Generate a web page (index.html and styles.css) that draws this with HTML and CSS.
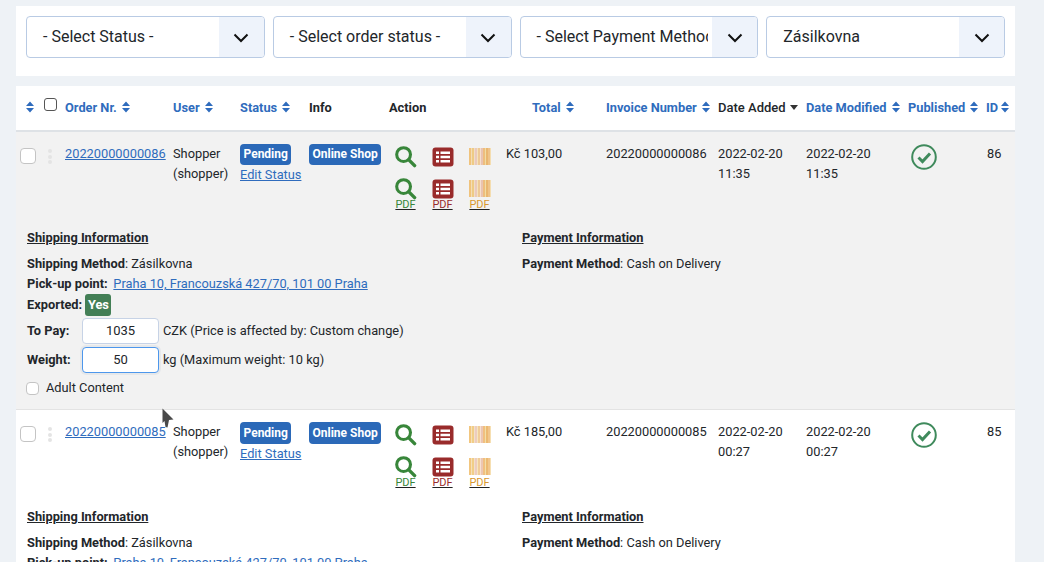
FILE: index.html
```html
<!DOCTYPE html>
<html lang="en">
<head>
<meta charset="utf-8">
<title>Orders</title>
<link rel="stylesheet" href="styles.css">
</head>
<body>
<svg class="defs" width="0" height="0">
  <symbol id="sort" viewBox="0 0 8 12"><path d="M4 .5 8 5H0zM4 11.5 0 7h8z"/></symbol>
  <symbol id="chev" viewBox="0 0 16 10"><path d="M1.5 1.5 8 8l6.5-6.5" fill="none" stroke="currentColor" stroke-width="2"/></symbol>
  <symbol id="mag" viewBox="0 0 24 24"><circle cx="10" cy="10" r="7.2" fill="none" stroke="#38863a" stroke-width="3.2"/><path d="m15.5 15.5 6 6" stroke="#38863a" stroke-width="3.6" stroke-linecap="round"/></symbol>
  <symbol id="list" viewBox="0 0 22 20"><rect x=".5" y=".5" width="21" height="19" rx="3" fill="#992b2b"/><path d="M4 4.500h3v2.400H4zM8.500 4.500H18v2.400H8.500zM4 8.800h3v2.400H4zM8.500 8.800H18v2.400H8.500zM4 13.100h3v2.400H4zM8.500 13.100H18v2.400H8.500z" fill="#fff"/></symbol>
  <symbol id="bar" viewBox="0 0 22 17"><path d="M0 0h2v17H0z" fill="#f0b860"/><path d="M2 0h1v17H2z" fill="#f5d9a8"/><path d="M3 0h2v17H3z" fill="#eec26a"/><path d="M5 0h1v17H5z" fill="#f0d8c0"/><path d="M6 0h2v17H6z" fill="#e8c0b0"/><path d="M8 0h1v17H8z" fill="#f5e0b0"/><path d="M9 0h2v17H9z" fill="#eec080"/><path d="M11 0h1v17h-1z" fill="#f5d8c8"/><path d="M12 0h2v17h-2z" fill="#e8b8a0"/><path d="M14 0h2v17h-2z" fill="#eeb060"/><path d="M16 0h1v17h-1z" fill="#f0d890"/><path d="M17 0h2v17h-2z" fill="#e8a850"/><path d="M19 0h2v17h-2z" fill="#eeb870"/><path d="M21 0h1v17h-1z" fill="#f5d8a0"/></symbol>
  <symbol id="ok" viewBox="0 0 26 26"><circle cx="13" cy="13" r="11.800" fill="none" stroke="#3f8a5c" stroke-width="2"/><path d="m7.500 13.500 4 4 7.500-8" fill="none" stroke="#3f8a5c" stroke-width="3"/></symbol>
</svg>

<main class="page">
  <section class="filters">
    <div class="pick"><span class="pick-text">- Select Status -</span><span class="pick-arrow"><svg class="chev"><use href="#chev"/></svg></span></div>
    <div class="pick"><span class="pick-text">- Select order status -</span><span class="pick-arrow"><svg class="chev"><use href="#chev"/></svg></span></div>
    <div class="pick"><span class="pick-text">- Select Payment Method -</span><span class="pick-arrow"><svg class="chev"><use href="#chev"/></svg></span></div>
    <div class="pick"><span class="pick-text">Zásilkovna</span><span class="pick-arrow"><svg class="chev"><use href="#chev"/></svg></span></div>
  </section>

  <section class="orders">
    <table class="grid">
      <colgroup>
        <col class="c-a"><col class="c-b"><col class="c-c"><col class="c-d"><col class="c-e"><col class="c-f"><col class="c-g"><col class="c-h"><col class="c-i"><col class="c-j"><col class="c-k"><col class="c-l">
      </colgroup>
      <thead>
        <tr>
          <th class="th-first"><svg class="sort"><use href="#sort"/></svg><input class="tick tick-head" type="checkbox"></th>
          <th><a>Order Nr. <svg class="sort"><use href="#sort"/></svg></a></th>
          <th><a>User <svg class="sort"><use href="#sort"/></svg></a></th>
          <th><a>Status <svg class="sort"><use href="#sort"/></svg></a></th>
          <th>Info</th>
          <th class="th-action">Action</th>
          <th class="th-total"><a>Total <svg class="sort"><use href="#sort"/></svg></a></th>
          <th><a>Invoice Number <svg class="sort"><use href="#sort"/></svg></a></th>
          <th class="th-active">Date Added <span class="caret"></span></th>
          <th><a>Date Modified <svg class="sort"><use href="#sort"/></svg></a></th>
          <th><a>Published <svg class="sort"><use href="#sort"/></svg></a></th>
          <th><a class="th-id">ID <svg class="sort"><use href="#sort"/></svg></a></th>
        </tr>
      </thead>
      <tbody class="odd">
        <tr class="main">
          <td class="grab"><input class="tick" type="checkbox"><span class="dots"><i></i><i></i><i></i></span></td>
          <td><a class="link" href="#">20220000000086</a></td>
          <td>Shopper (shopper)</td>
          <td><span class="tag">Pending</span><a class="link edit" href="#">Edit Status</a></td>
          <td><span class="tag">Online Shop</span></td>
          <td>
            <div class="acts">
              <svg class="i-mag"><use href="#mag"/></svg><svg class="i-list"><use href="#list"/></svg><svg class="i-bar"><use href="#bar"/></svg>
              <span class="pdf pdf-g"><svg class="i-mag"><use href="#mag"/></svg><u>PDF</u></span>
              <span class="pdf pdf-r"><svg class="i-list"><use href="#list"/></svg><u>PDF</u></span>
              <span class="pdf pdf-o"><svg class="i-bar"><use href="#bar"/></svg><u>PDF</u></span>
            </div>
          </td>
          <td>Kč 103,00</td>
          <td>20220000000086</td>
          <td class="date">2022-02-20 11:35</td>
          <td class="date">2022-02-20 11:35</td>
          <td class="td-pub"><svg class="i-ok"><use href="#ok"/></svg></td>
          <td>86</td>
        </tr>
        <tr class="detail">
          <td colspan="12">
            <div class="info">
              <div class="info-col">
                <h4>Shipping Information</h4>
                <p><b>Shipping Method</b>: Zásilkovna</p>
                <p><b>Pick-up point:</b> <a class="link near" href="#">Praha 10, Francouzská 427/70, 101 00 Praha</a></p>
                <p class="exported"><b>Exported:</b> <span class="yes">Yes</span></p>
                <div class="field"><b>To Pay:</b><input class="num" value="1035"><span>CZK (Price is affected by: Custom change)</span></div>
                <div class="field"><b>Weight:</b><input class="num num-focus" value="50"><span>kg (Maximum weight: 10 kg)</span></div>
                <label class="adult"><input class="tick tick-sm" type="checkbox">Adult Content</label>
              </div>
              <div class="info-col">
                <h4>Payment Information</h4>
                <p><b>Payment Method</b>: Cash on Delivery</p>
              </div>
            </div>
          </td>
        </tr>
      </tbody>
      <tbody>
        <tr class="main main-2">
          <td class="grab"><input class="tick" type="checkbox"><span class="dots"><i></i><i></i><i></i></span></td>
          <td><a class="link" href="#">20220000000085</a></td>
          <td>Shopper (shopper)</td>
          <td><span class="tag">Pending</span><a class="link edit" href="#">Edit Status</a></td>
          <td><span class="tag">Online Shop</span></td>
          <td>
            <div class="acts">
              <svg class="i-mag"><use href="#mag"/></svg><svg class="i-list"><use href="#list"/></svg><svg class="i-bar"><use href="#bar"/></svg>
              <span class="pdf pdf-g"><svg class="i-mag"><use href="#mag"/></svg><u>PDF</u></span>
              <span class="pdf pdf-r"><svg class="i-list"><use href="#list"/></svg><u>PDF</u></span>
              <span class="pdf pdf-o"><svg class="i-bar"><use href="#bar"/></svg><u>PDF</u></span>
            </div>
          </td>
          <td>Kč 185,00</td>
          <td>20220000000085</td>
          <td class="date">2022-02-20 00:27</td>
          <td class="date">2022-02-20 00:27</td>
          <td class="td-pub"><svg class="i-ok"><use href="#ok"/></svg></td>
          <td>85</td>
        </tr>
        <tr class="detail">
          <td colspan="12">
            <div class="info">
              <div class="info-col">
                <h4>Shipping Information</h4>
                <p><b>Shipping Method</b>: Zásilkovna</p>
                <p><b>Pick-up point:</b> <a class="link near" href="#">Praha 10, Francouzská 427/70, 101 00 Praha</a></p>
              </div>
              <div class="info-col">
                <h4>Payment Information</h4>
                <p><b>Payment Method</b>: Cash on Delivery</p>
              </div>
            </div>
          </td>
        </tr>
      </tbody>
    </table>
  </section>
</main>

<svg class="cursor" viewBox="0 0 12 20"><path d="M.5.500 11.500 11.500 7 12l-1.500 7.500-2-.5L2.500 13 .5 15z" fill="#4a4a4a"/></svg>
</body>
</html>
```

FILE: styles.css
```css
* { box-sizing: border-box; }
html, body { margin: 0; height: 562px; overflow: hidden; }
body { background: #eef2f6; font: 12.8px/19.5px Roboto, sans-serif; color: #22262a; }
.defs { position: absolute; }
.page { padding: 6px 29px 0 16px; }

.filters { background: #fff; height: 70px; padding: 10px 0 0 10px; display: grid; grid-template-columns: repeat(4, 238.75px); column-gap: 8px; align-items: start; margin-bottom: 10px; }
.pick { height: 42px; display: flex; border: 1px solid #b9cbe4; border-radius: 4px; overflow: hidden; background: #fff; }
.pick-text { flex: 1; min-width: 0; padding-left: 16px; font-size: 16px; line-height: 40px; white-space: nowrap; overflow: hidden; margin-right: 4px; }
.pick-arrow { flex: none; width: 45px; padding-top: 1px; background: #eef3fb; display: flex; align-items: center; justify-content: center; color: #111; }
.chev { width: 16px; height: 10px; }

.orders { background: #fff; height: 476px; overflow: hidden; }
.grid { width: 999px; table-layout: fixed; border-collapse: collapse; }
.c-a { width: 49px; } .c-b { width: 108px; } .c-c { width: 67px; } .c-d { width: 69px; }
.c-e { width: 78px; } .c-f { width: 119px; } .c-g { width: 100px; } .c-h { width: 112px; }
.c-i { width: 88px; } .c-j { width: 102px; } .c-k { width: 79px; } .c-l { width: 28px; }

th { height: 45px; padding: 0; text-align: left; font-weight: 700; font-size: 12.8px; white-space: nowrap; border-bottom: 2px solid #dee2e6; color: #22262a; }
th a { color: #2f6cbd; }
.sort { width: 8px; height: 12px; margin-left: 2px; fill: #2f6cbd; vertical-align: -1px; }
.th-first { padding-left: 10px; }
.th-first .sort { margin-left: 0; }
.th-action { padding-left: 2px; }
.th-total { padding-left: 26px; }
.th-active { font-weight: 500; font-size: 13px; }
.th-id { margin-left: -1px; }
.th-id .sort { margin-left: 0; }
.caret { display: inline-block; width: 0; height: 0; border: 4.500px solid transparent; border-top: 5px solid #333; border-bottom: 0; vertical-align: 2px; margin-left: 1px; }

.tick { appearance: none; margin: 0; width: 16px; height: 16px; background: #fff; border: 1px solid #c4c4c4; border-radius: 4px; }
.tick-head { width: 13px; height: 13px; border-color: #555; border-radius: 3px; margin-left: 10px; vertical-align: 1px; }
.tick-sm { width: 13px; height: 13px; margin: 0 7px 0 -1px; }

.odd { background: #f2f2f2; }
.main td { vertical-align: top; padding: 12px 0 0; }
.main { height: 95px; }
.main td.grab { padding-left: 4px; display: flex; align-items: flex-start; }
.grab .tick { margin-top: 4px; }
.dots { display: flex; flex-direction: column; gap: 1.500px; margin: 5px 0 0 12px; }
.dots i { width: 4px; height: 4px; border-radius: 50%; background: #e4e4e4; }
.main td.date { padding-right: 20px; }

.link { color: #2f6cbd; text-decoration: underline; }
.tag { display: inline-block; background: #2b69b8; color: #fff; font-weight: 700; font-size: 12px; line-height: 20px; height: 21px; padding: 0 3.500px; border-radius: 4px; white-space: nowrap; }
.main-2 .tag { height: 22px; line-height: 22px; }
.edit { display: block; font-size: 12.800px; margin-top: 1px; line-height: 18px; }

.acts { display: grid; grid-template-columns: repeat(3, 37px); grid-auto-rows: 32px; justify-items: center; align-items: start; }
.i-mag { width: 23px; height: 23px; margin-top: 1px; }
.i-list { width: 22px; height: 20px; margin-top: 3px; display: block; }
.i-bar { width: 22px; height: 17px; margin-top: 4px; display: block; opacity: .8; }
.pdf { display: flex; flex-direction: column; align-items: center; font-size: 11px; line-height: 12px; height: 36px; }
.pdf .i-mag { margin-bottom: -1px; }
.pdf .i-bar { margin-bottom: 2px; }
.pdf u { text-decoration-color: #222; }
.pdf-g { color: #38863a; } .pdf-r { color: #992b2b; } .pdf-o { color: #d9982f; }
.main td.td-pub { padding-left: 3px; }
.i-ok { width: 26px; height: 26px; display: block; }

.detail td { padding: 0; }
.odd .detail td { border-bottom: 1px solid #e3e3e3; }
.info { display: grid; grid-template-columns: 495px 1fr; padding: 2px 11px 0; font-size: 12.800px; height: 183px; }
.info h4 { margin: 0 0 6px; font-size: 12.800px; font-weight: 700; line-height: 20px; text-decoration: underline; }
.info p { margin: 0; line-height: 20px; }
.near { margin-left: 2.500px; }
.exported { height: 22px; }
.yes { display: inline-block; background: #437f56; color: #fff; font-weight: 700; border-radius: 3px; padding: 0 2.500px; line-height: 22px; }
.field { display: flex; align-items: center; height: 26px; margin-top: 3px; }
.field b { width: 55px; }
.exported + .field { margin-top: 2px; }
.num { width: 77px; height: 26px; margin-right: 4px; border: 1px solid #c7d3e6; border-radius: 4px; background: #fff; text-align: center; font: 13px Roboto, sans-serif; color: #22262a; padding: 0 0 2px; outline: 0; }
.num-focus { border-color: #4d97ec; box-shadow: 0 0 0 2px #e6e8ea; }
.adult { display: flex; align-items: center; margin-top: 5px; line-height: 20px; }

.cursor { position: absolute; left: 162px; top: 407.500px; width: 12px; height: 20px; }
```
